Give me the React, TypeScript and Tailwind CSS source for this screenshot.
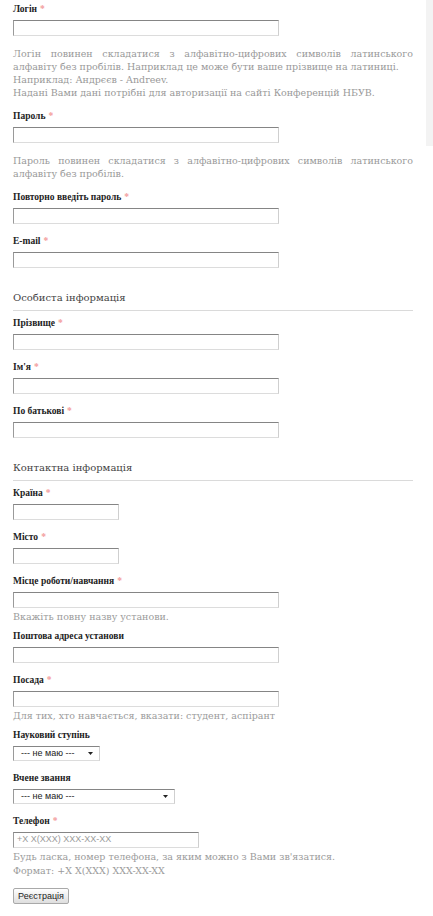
import type { ReactNode } from 'react'

const serif = 'font-["DejaVu_Serif",serif]'
const labelFont = 'font-["Liberation_Serif",serif]'
const sans = 'font-["Liberation_Sans",Arial,sans-serif]'

const inputBorder = 'border border-t-[#858585] border-l-[#9a9a9a] border-b-[#dcdcdc] border-r-[#cfcfcf] bg-white'

function Label({ text, required }: { text: string; required?: boolean }) {
  return (
    <div className={`${labelFont} h-[12px] text-[9.5px] leading-[12px] font-bold text-[#222]`}>
      {text}
      {required && <span className="ml-[3px] text-[#f39c9c]">*</span>}
    </div>
  )
}

function Field({
  label,
  required,
  width = 'w-[266px]',
  placeholder,
  children,
}: {
  label: string
  required?: boolean
  width?: string
  placeholder?: string
  children?: ReactNode
}) {
  return (
    <div className="flex flex-col">
      <Label text={label} required={required} />
      <div className={`mt-[5px] h-[16px] ${width} ${inputBorder} flex items-center px-[3px]`}>
        {placeholder && <span className={`${sans} text-[9px] text-[#9a9a9a]`}>{placeholder}</span>}
      </div>
      {children}
    </div>
  )
}

function Select({ label, width }: { label: string; width: string }) {
  return (
    <div className="flex flex-col">
      <Label text={label} />
      <div className={`mt-[5px] h-[15px] ${width} ${inputBorder} flex items-center justify-between pl-[7px] pr-[6px]`}>
        <span className={`${sans} text-[9px] leading-none text-[#222]`}>--- не маю ---</span>
        <svg width="5" height="3" viewBox="0 0 5 3">
          <path d="M0 0h5L2.5 3z" fill="#222" />
        </svg>
      </div>
    </div>
  )
}

// short grey hint under a field
function Help({ children }: { children: ReactNode }) {
  return <p className={`${serif} mt-[2px] -mb-[5px] text-[9.5px] leading-[14px] text-[#9b9b9b]`}>{children}</p>
}

function Heading({ children }: { children: ReactNode }) {
  return (
    <div className="mt-[11px] -mb-[5px] border-b border-[#dadada] pb-[4px]">
      <h2 className={`${serif} text-[10px] leading-[16px] text-[#444]`}>{children}</h2>
    </div>
  )
}

export default function App() {
  return (
    <div className="flex min-h-screen bg-white">
      <div className="w-[426px] px-[13px] pt-[3px] pb-[12px] flex flex-col gap-[11px]">
        <Field label="Логін" required>
          <p className={`${serif} mt-[11px] text-justify text-[9.5px] leading-[13px] text-[#999]`}>
            Логін повинен складатися з алфавітно-цифрових символів латинського алфавіту без пробілів. Наприклад це може
            бути ваше прізвище на латиниці.
            <br />
            Наприклад: Андрєєв - Andreev.
            <br />
            Надані Вами дані потрібні для авторизації на сайті Конференцій НБУВ.
          </p>
        </Field>
        <Field label="Пароль" required>
          <p className={`${serif} mt-[11px] text-justify text-[9.5px] leading-[13px] text-[#999]`}>
            Пароль повинен складатися з алфавітно-цифрових символів латинського алфавіту без пробілів.
          </p>
        </Field>
        <Field label="Повторно введіть пароль" required />
        <Field label="E-mail" required />

        <Heading>Особиста інформація</Heading>
        <Field label="Прізвище" required />
        <Field label="Ім'я" required />
        <Field label="По батькові" required />

        <Heading>Контактна інформація</Heading>
        <Field label="Країна" required width="w-[106px]" />
        <Field label="Місто" required width="w-[106px]" />
        <Field label="Місце роботи/навчання" required>
          <Help>Вкажіть повну назву установи.</Help>
        </Field>
        <Field label="Поштова адреса установи" />
        <Field label="Посада" required>
          <Help>Для тих, хто навчається, вказати: студент, аспірант</Help>
        </Field>
        <Select label="Науковий ступінь" width="w-[87px]" />
        <Select label="Вчене звання" width="w-[162px]" />
        <Field label="Телефон" required width="w-[186px]" placeholder="+X X(XXX) XXX-XX-XX">
          <Help>
            Будь ласка, номер телефона, за яким можно з Вами зв'язатися.
            <br />
            Формат: +X X(XXX) XXX-XX-XX
          </Help>
        </Field>

        <div className="mt-[4px] flex">
          <button
            className={`${sans} h-[16px] w-[56px] rounded-[2px] border border-[#a9a9a9] bg-gradient-to-b from-white to-[#dedede] text-[9px] leading-none text-[#222]`}
          >
            Реєстрація
          </button>
        </div>
      </div>
      <div className="w-[7px] h-[146px] bg-[#f3f3f3]" />
    </div>
  )
}
